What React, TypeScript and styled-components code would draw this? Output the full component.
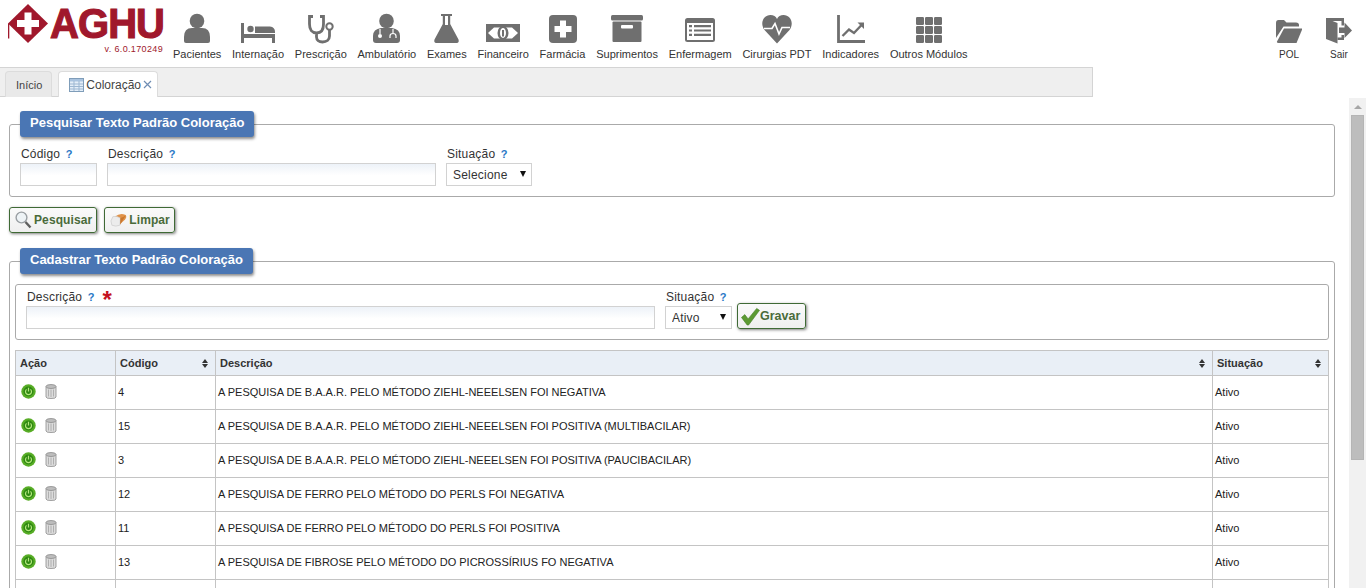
import React from 'react';
import styled, { createGlobalStyle } from 'styled-components';

const GlobalStyle = createGlobalStyle`
  html, body {
    margin: 0;
    height: 100%;
    overflow: hidden;
    background: #fff;
  }
  body {
    font-family: "Liberation Sans", Arial, sans-serif;
    color: #333;
  }
`;

const ICON = '#6f6f6f';
const RED = '#a0182c';

const Page = styled.div`
  width: 1366px;
  height: 588px;
  overflow: hidden;
  display: flex;
  flex-direction: column;
`;

const Header = styled.header`
  height: 67px;
  flex: none;
  display: flex;
  padding: 0 14px 0 7px;
  box-sizing: border-box;
`;

const LogoBlock = styled.div`
  width: 157px;
  margin-right: 9px;
  display: flex;
  flex-direction: column;
`;

const LogoRow = styled.div`
  display: flex;
  align-items: flex-start;
  padding-top: 3px;
  height: 41px;
`;

const LogoSvg = styled.svg`
  flex: none;
`;

const LogoWord = styled.span`
  font-size: 43px;
  font-weight: 700;
  line-height: 36px;
  margin: 2px 0 0 1px;
  color: ${RED};
  letter-spacing: -1px;
  -webkit-text-stroke: 1.2px ${RED};
  transform: scaleX(0.93);
  transform-origin: left center;
  white-space: nowrap;
`;

const Version = styled.span`
  align-self: flex-end;
  padding-right: 1px;
  font-size: 9px;
  line-height: 10px;
  letter-spacing: 0.35px;
  color: ${RED};
`;

const Nav = styled.nav`
  display: flex;
  gap: 10.75px;
`;

const NavItem = styled.a`
  display: flex;
  flex-direction: column;
  align-items: center;
  font-size: 11px;
  line-height: 13px;
  color: #333;
  white-space: nowrap;
`;

const NavIcon = styled.svg`
  display: block;
  margin: 12px 0 4px;
  fill: ${ICON};
`;

const RightNav = styled(Nav)`
  margin-left: auto;
  gap: 24px;
`;

const RightItem = styled(NavItem)`
  width: 26px;
  font-size: 10px;
`;

const TabBar = styled.div`
  width: 1093px;
  height: 30px;
  flex: none;
  box-sizing: border-box;
  background: #efefef;
  border-top: 1px solid #d4d4d4;
  border-bottom: 1px solid #d4d4d4;
  border-right: 1px solid #d4d4d4;
  padding: 3px 0 0 5px;
  display: flex;
  gap: 6px;
`;

const Tab = styled.div<{ $active?: boolean }>`
  height: 26px;
  box-sizing: border-box;
  display: flex;
  align-items: center;
  gap: 2px;
  font-size: ${p => (p.$active ? '12px' : '11px')};
  color: #444;
  border-radius: 4px 4px 0 0;
  background: ${p => (p.$active ? '#fff' : '#e9e9e9')};
  border: 1px solid #dcdcdc;
  border-bottom: none;
  padding: ${p => (p.$active ? '0 5px 0 10px' : '0 9px 0 10px')};
`;

const Body = styled.div`
  flex: 1;
  min-height: 0;
  display: flex;
`;

const Content = styled.main`
  flex: 1;
  min-width: 0;
  overflow: hidden;
  padding: 0 14px 0 9px;
`;

const ScrollTrack = styled.div`
  width: 17px;
  margin-top: 1px;
  flex: none;
  background: #f1f1f1;
  display: flex;
  flex-direction: column;
  align-items: center;
`;

const ScrollArrow = styled.div`
  margin: 7px 0 6px;
  width: 0;
  height: 0;
  border-left: 4px solid transparent;
  border-right: 4px solid transparent;
  border-bottom: 4px solid #a6a6a6;
`;

const ScrollThumb = styled.div`
  width: 13px;
  height: 345px;
  background: #bdbdbd;
  border: 1px solid #b5b5b5;
  box-sizing: border-box;
`;

const Panel = styled.fieldset<{ $top: number; $side: number }>`
  margin: ${p => p.$top}px 0 0;
  padding: 0 ${p => p.$side}px 10px;
  border: 1px solid #aaa;
  border-radius: 3px;
  min-width: 0;
`;

const PanelTitle = styled.legend<{ $indent: number }>`
  margin-left: ${p => p.$indent}px;
  height: 26px;
  box-sizing: border-box;
  padding: 0 10px;
  background: #4a76b4;
  color: #fff;
  font-size: 13px;
  font-weight: 700;
  line-height: 24px;
  border-radius: 3px;
  box-shadow: 1px 2px 3px rgba(0, 0, 0, 0.45);
`;

const FormRow = styled.div`
  display: flex;
  gap: 10px;
  padding-top: 8px;
  align-items: flex-end;
`;

const Field = styled.div`
  display: flex;
  flex-direction: column;
`;

const Label = styled.label`
  font-size: 12px;
  line-height: 18px;
  letter-spacing: 0.2px;
  color: #333;
  padding-left: 1px;
  white-space: nowrap;
`;

const Help = styled.span`
  font-size: 11px;
  font-weight: 700;
  color: #2a78c6;
  margin-left: 2px;
`;

const Required = styled.span`
  font-size: 24px;
  line-height: 10px;
  font-weight: 700;
  color: #c4121f;
  margin-left: 8px;
  vertical-align: -7px;
`;

const TextInput = styled.input<{ $width: number }>`
  display: block;
  width: ${p => p.$width}px;
  height: 23px;
  box-sizing: border-box;
  margin: 0;
  border: 1px solid #d2d2d2;
  background: linear-gradient(#edf2f8, #fff 55%);
  outline: none;
`;

const SelectWrap = styled.div<{ $width: number }>`
  position: relative;
  width: ${p => p.$width}px;
  &::after {
    content: '';
    position: absolute;
    right: 6px;
    top: 8px;
    border-left: 3.5px solid transparent;
    border-right: 3.5px solid transparent;
    border-top: 6px solid #111;
  }
`;

const Select = styled.select`
  appearance: none;
  display: block;
  width: 100%;
  height: 23px;
  box-sizing: border-box;
  margin: 0;
  padding: 0 0 0 6px;
  border: 1px solid #d2d2d2;
  background: #fff;
  font-family: inherit;
  font-size: 12px;
  letter-spacing: 0.2px;
  color: #333;
`;

const ButtonRow = styled.div`
  display: flex;
  gap: 7px;
  margin-top: 10px;
`;

const Button = styled.button`
  height: 26px;
  box-sizing: border-box;
  display: flex;
  align-items: center;
  gap: 2px;
  margin: 0;
  padding: 0 4px 0 5px;
  border: 1px solid #3f6a35;
  border-radius: 3px;
  background: linear-gradient(#fafafa, #efefef);
  box-shadow: 1px 1px 3px rgba(0, 0, 0, 0.5);
  font-family: inherit;
  font-size: 12px;
  font-weight: 700;
  letter-spacing: 0.1px;
  color: #4a6b3a;
  white-space: nowrap;
`;

const InnerBox = styled.div`
  margin-top: 10px;
  height: 56px;
  box-sizing: border-box;
  border: 1px solid #aaa;
  border-radius: 3px;
  padding: 0 10px;
  display: flex;
  gap: 10px;
  align-items: flex-start;
`;

const InnerField = styled(Field)`
  padding-top: 3px;
`;

const SaveButton = styled(Button)`
  margin: 18px 0 0 -5px;
  font-size: 12.5px;
  letter-spacing: 0;
  gap: 0;
  padding: 0 5px 0 3px;
`;

const Table = styled.table`
  margin-top: 10px;
  width: 1314px;
  table-layout: fixed;
  border-collapse: collapse;
  font-size: 11px;
  color: #222;
`;

const HeadCell = styled.th<{ $width?: number }>`
  width: ${p => (p.$width ? `${p.$width}px` : 'auto')};
  height: 25px;
  padding: 0 4px;
  box-sizing: border-box;
  border: 1px solid #c4c4c4;
  background: #e9eff6;
  font-weight: 700;
  text-align: left;
  color: #333;
`;

const HeadInner = styled.div`
  display: flex;
  align-items: center;
  justify-content: space-between;
`;

const SortMark = styled.span`
  display: flex;
  flex-direction: column;
  gap: 1px;
  margin-right: 3px;
  &::before, &::after {
    content: '';
    border-left: 3px solid transparent;
    border-right: 3px solid transparent;
  }
  &::before {
    border-bottom: 4px solid #333;
  }
  &::after {
    border-top: 4px solid #333;
  }
`;

const Cell = styled.td`
  height: 34px;
  padding: 0 2px 2px;
  box-sizing: border-box;
  border: 1px solid #c4c4c4;
  white-space: nowrap;
  overflow: hidden;
`;

const ActionCell = styled(Cell)`
  padding: 0 0 3px 5px;
`;

const Actions = styled.div`
  display: flex;
  align-items: center;
  gap: 9px;
`;

const TabTableIcon = () => (
  <svg width="15" height="14" viewBox="0 0 15 14">
    <rect x="0.5" y="0.5" width="14" height="13" fill="#e4eef8" stroke="#7f9db9" />
    <rect x="1" y="1" width="13" height="2.5" fill="#a9c3df" />
    <path d="M1 6h13M1 8.5h13M1 11h13M5 3v10M10 3v10" stroke="#9db7d2" strokeWidth="1" fill="none" />
  </svg>
);

const CloseIcon = () => (
  <svg width="9" height="9" viewBox="0 0 9 9">
    <path d="M1 1l7 7M8 1l-7 7" stroke="#6f8db3" strokeWidth="1.2" fill="none" />
  </svg>
);

const LogoMark = () => (
  <LogoSvg width="42" height="42" viewBox="0 0 42 42">
    <path d="M21 1L41 20.5 21 40 1 20.5Z" fill={RED} />
    <path d="M17.5 9.5h7V17H32v7h-7.5v7.5h-7V24H10v-7h7.5Z" fill="#fff" />
    <rect x="1" y="20.5" width="1.3" height="15" fill={RED} />
  </LogoSvg>
);

const PersonIcon = () => (
  <NavIcon width="26" height="32" viewBox="0 0 26 32">
    <circle cx="13" cy="9" r="7.3" />
    <path d="M0 29V25Q0 16 8 16H18Q26 16 26 25V29Q26 31 24 31H2Q0 31 0 29Z" />
  </NavIcon>
);

const BedIcon = () => (
  <NavIcon width="34" height="32" viewBox="0 0 34 32">
    <rect x="0" y="11" width="3" height="20" />
    <circle cx="9.5" cy="17" r="3.2" />
    <path d="M14 14.5H29Q34 15 34 20V21H14Z" />
    <rect x="3" y="22" width="31" height="4" />
    <rect x="31" y="26" width="3" height="5" />
  </NavIcon>
);

const StethoscopeIcon = () => (
  <NavIcon width="28" height="32" viewBox="0 0 28 32">
    <path
      d="M6 4.5H2.5V12C2.5 18 5 21 9.5 21C14 21 16.5 18 16.5 12V4.5H13M9.5 21V25C9.5 28 12 30 15.5 30C19.5 30 22.5 28 22.5 24V18"
      fill="none"
      stroke={ICON}
      strokeWidth="2.8"
    />
    <circle cx="22.5" cy="14.5" r="3.2" fill="none" stroke={ICON} strokeWidth="2" />
  </NavIcon>
);

const DoctorIcon = () => (
  <NavIcon width="27" height="32" viewBox="0 0 27 32">
    <circle cx="13.5" cy="9" r="7.3" />
    <path d="M0 28V24Q0 17 8 16H19Q27 17 27 24V28Q27 31 24 31H3Q0 31 0 28Z" />
    <path d="M7 17V22M20 17V21M17 26V24Q17 21.5 20 21.5Q23 21.5 23 24V26" fill="none" stroke="#fff" strokeWidth="1.2" />
    <circle cx="7" cy="24" r="2" fill="#fff" />
  </NavIcon>
);

const FlaskIcon = () => (
  <NavIcon width="25" height="32" viewBox="0 0 25 32">
    <path d="M7 2H18V4H16.2V12L24.5 27.5Q25.5 31 22 31H3Q-0.5 31 0.5 27.5L8.8 12V4H7Z" />
    <rect x="11" y="4" width="3" height="9" fill="#fff" />
  </NavIcon>
);

const MoneyIcon = () => (
  <NavIcon width="34" height="32" viewBox="0 0 34 32">
    <rect x="0" y="12" width="34" height="18" />
    <path d="M2 21L8 15.5H26L32 21L26 26.5H8Z" fill="#fff" />
    <ellipse cx="17" cy="21" rx="5.5" ry="7" />
    <ellipse cx="17" cy="21" rx="3" ry="5" fill="#fff" />
    <rect x="16" y="18" width="2" height="6.5" />
  </NavIcon>
);

const PlusIcon = () => (
  <NavIcon width="28" height="32" viewBox="0 0 28 32">
    <rect x="0" y="3" width="28" height="28" rx="4" />
    <path d="M11 8.5H17V14H22.5V20H17V25.5H11V20H5.5V14H11Z" fill="#fff" />
  </NavIcon>
);

const ArchiveIcon = () => (
  <NavIcon width="32" height="32" viewBox="0 0 32 32">
    <rect x="0" y="3" width="32" height="5.5" rx="1.5" />
    <rect x="1.5" y="9.5" width="29" height="20.5" rx="1" />
    <rect x="10" y="13" width="12" height="3.5" rx="1" fill="#fff" />
  </NavIcon>
);

const ListIcon = () => (
  <NavIcon width="30" height="32" viewBox="0 0 30 32">
    <rect x="0" y="6" width="30" height="24" rx="2.5" />
    <rect x="2" y="11" width="26" height="17" fill="#fff" />
    <path d="M9 14.2H26M9 18.5H26M9 22.8H26" stroke={ICON} strokeWidth="2.2" />
    <path d="M4 14.2H7M4 18.5H7M4 22.8H7" stroke={ICON} strokeWidth="2.2" />
  </NavIcon>
);

const HeartIcon = () => (
  <NavIcon width="30" height="32" viewBox="0 0 30 32">
    <path d="M15 31.5L2.5 18C-2.5 11 1.5 3 8.5 3C11.5 3 14 4.5 15 7C16 4.5 18.5 3 21.5 3C28.5 3 32.5 11 27.5 18Z" />
    <path d="M2 16.5H10L13 11.5L17 22L20 15.5H28" fill="none" stroke="#fff" strokeWidth="1.6" />
  </NavIcon>
);

const ChartIcon = () => (
  <NavIcon width="28" height="32" viewBox="0 0 28 32">
    <path d="M1.5 3V29.5H28" fill="none" stroke={ICON} strokeWidth="2.8" />
    <path d="M5.5 24L12 17.5L17 21L25 12.5" fill="none" stroke={ICON} strokeWidth="2.4" />
    <path d="M20.5 10.5H27V17Z" />
  </NavIcon>
);

const GridIcon = () => (
  <NavIcon width="26" height="32" viewBox="0 0 26 32">
    {[5, 14, 23].map(y =>
      [0, 9, 18].map(x => <rect key={`${x}-${y}`} x={x} y={y} width="8" height="8" rx="1.2" />)
    )}
  </NavIcon>
);

const FolderIcon = () => (
  <NavIcon width="26" height="32" viewBox="0 0 26 32">
    <path d="M0 11Q0 8 2.5 8H8L10.5 10.5H20Q23 10.5 23 13V14.5H7.5L0 26Z" />
    <path d="M8 16.5H26.5L20.5 31H2.5Q0.5 31 1 29.5Z" />
  </NavIcon>
);

const ExitIcon = () => (
  <NavIcon width="26" height="32" viewBox="0 0 26 32">
    <path d="M0 6H18V13.5H15.5V9H6.5L11.5 11V31.5L0 27Z" />
    <path d="M15.5 23H18V28H11.5V25.5H15.5Z" />
    <path d="M13 15.5H18.5V10.5L26 18.5L18.5 26V21H13Z" />
  </NavIcon>
);

const LensIcon = () => (
  <svg width="17" height="18" viewBox="0 0 17 18">
    <circle cx="6.5" cy="6.5" r="5.4" fill="#eef3f6" stroke="#9a9fa3" strokeWidth="1.4" />
    <path d="M10.5 11L15.5 16.5" stroke="#5f5f5f" strokeWidth="2.4" />
  </svg>
);

const EraserIcon = () => (
  <svg width="17" height="14" viewBox="0 0 18 14">
    <path d="M5 3.5Q11 -1 16 1.5Q18.5 3 16 6.5L11 11Z" fill="#e0934a" />
    <path d="M3 3.5Q7 2 11 5L10.5 12.5Q6 14.5 2 12.5Q-0.5 8 3 3.5Z" fill="#ececec" stroke="#c4c4c4" strokeWidth="0.6" />
    <path d="M11 5Q14 4 17 2Q14 6 10.8 12Z" fill="#c9772f" />
  </svg>
);

const CheckIcon = () => (
  <svg width="19" height="19" viewBox="0 0 20 19">
    <path d="M0.5 10.5L4 7.5L7.5 12L16.5 1L19.5 3L8 18.5H6.5Z" fill="#5c9a32" stroke="#3f7a22" strokeWidth="0.6" />
  </svg>
);

const PowerIcon = () => (
  <svg width="15" height="15" viewBox="0 0 15 15">
    <circle cx="7.5" cy="7.5" r="7.2" fill="#58ad26" />
    <circle cx="7.5" cy="7.5" r="5" fill="#2f8a12" />
    <path d="M5.5 5.4A3 3 0 1 0 9.5 5.4M7.5 3.8V7.5" fill="none" stroke="#b4e67c" strokeWidth="1.2" />
  </svg>
);

const TrashIcon = () => (
  <svg width="12" height="15" viewBox="0 0 12 15">
    <path d="M1 2.5V13Q1 14.5 6 14.5Q11 14.5 11 13V2.5Z" fill="#dcdcdc" stroke="#8c8c8c" strokeWidth="0.8" />
    <ellipse cx="6" cy="2.5" rx="5" ry="2" fill="#bdbdbd" stroke="#8c8c8c" strokeWidth="0.8" />
    <path d="M3.5 5.5V12.5M6 5.5V13M8.5 5.5V12.5" stroke="#a3a3a3" strokeWidth="0.8" />
  </svg>
);

const modules: [string, React.FC][] = [
  ['Pacientes', PersonIcon],
  ['Internação', BedIcon],
  ['Prescrição', StethoscopeIcon],
  ['Ambulatório', DoctorIcon],
  ['Exames', FlaskIcon],
  ['Financeiro', MoneyIcon],
  ['Farmácia', PlusIcon],
  ['Suprimentos', ArchiveIcon],
  ['Enfermagem', ListIcon],
  ['Cirurgias PDT', HeartIcon],
  ['Indicadores', ChartIcon],
  ['Outros Módulos', GridIcon],
];

const BAAR = 'A PESQUISA DE B.A.A.R. PELO MÉTODO ZIEHL-NEEELSEN FOI';

const rows: [string, string][] = [
  ['4', `${BAAR} NEGATIVA`],
  ['15', `${BAAR} POSITIVA (MULTIBACILAR)`],
  ['3', `${BAAR} POSITIVA (PAUCIBACILAR)`],
  ['12', 'A PESQUISA DE FERRO PELO MÉTODO DO PERLS FOI NEGATIVA'],
  ['11', 'A PESQUISA DE FERRO PELO MÉTODO DO PERLS FOI POSITIVA'],
  ['13', 'A PESQUISA DE FIBROSE PELO MÉTODO DO PICROSSÍRIUS FO NEGATIVA'],
];

export default function App () {
  return (
    <Page>
      <GlobalStyle />
      <Header>
        <LogoBlock>
          <LogoRow>
            <LogoMark />
            <LogoWord>AGHU</LogoWord>
          </LogoRow>
          <Version>v. 6.0.170249</Version>
        </LogoBlock>
        <Nav>
          {modules.map(([name, Icon]) => (
            <NavItem key={name}>
              <Icon />
              {name}
            </NavItem>
          ))}
        </Nav>
        <RightNav>
          <RightItem><FolderIcon />POL</RightItem>
          <RightItem><ExitIcon />Sair</RightItem>
        </RightNav>
      </Header>

      <TabBar>
        <Tab>Início</Tab>
        <Tab $active><TabTableIcon />Coloração<CloseIcon /></Tab>
      </TabBar>

      <Body>
        <Content>
          <Panel $top={14} $side={10}>
            <PanelTitle $indent={0}>Pesquisar Texto Padrão Coloração</PanelTitle>
            <FormRow>
              <Field>
                <Label>Código <Help>?</Help></Label>
                <TextInput $width={77} />
              </Field>
              <Field>
                <Label>Descrição <Help>?</Help></Label>
                <TextInput $width={329} />
              </Field>
              <Field>
                <Label>Situação <Help>?</Help></Label>
                <SelectWrap $width={86}>
                  <Select><option>Selecione</option></Select>
                </SelectWrap>
              </Field>
            </FormRow>
          </Panel>

          <ButtonRow>
            <Button><LensIcon />Pesquisar</Button>
            <Button><EraserIcon />Limpar</Button>
          </ButtonRow>

          <Panel $top={15} $side={5}>
            <PanelTitle $indent={5}>Cadastrar Texto Padrão Coloração</PanelTitle>
            <InnerBox>
              <InnerField>
                <Label>Descrição <Help>?</Help><Required>*</Required></Label>
                <TextInput $width={629} />
              </InnerField>
              <InnerField>
                <Label>Situação <Help>?</Help></Label>
                <SelectWrap $width={67}>
                  <Select><option>Ativo</option></Select>
                </SelectWrap>
              </InnerField>
              <SaveButton><CheckIcon />Gravar</SaveButton>
            </InnerBox>

            <Table>
              <thead>
                <tr>
                  <HeadCell $width={100}>Ação</HeadCell>
                  <HeadCell $width={100}><HeadInner>Código<SortMark /></HeadInner></HeadCell>
                  <HeadCell><HeadInner>Descrição<SortMark /></HeadInner></HeadCell>
                  <HeadCell $width={116}><HeadInner>Situação<SortMark /></HeadInner></HeadCell>
                </tr>
              </thead>
              <tbody>
                {rows.map(([code, text]) => (
                  <tr key={code}>
                    <ActionCell>
                      <Actions><PowerIcon /><TrashIcon /></Actions>
                    </ActionCell>
                    <Cell>{code}</Cell>
                    <Cell>{text}</Cell>
                    <Cell>Ativo</Cell>
                  </tr>
                ))}
                <tr>
                  <Cell />
                  <Cell />
                  <Cell />
                  <Cell />
                </tr>
              </tbody>
            </Table>
          </Panel>
        </Content>
        <ScrollTrack>
          <ScrollArrow />
          <ScrollThumb />
        </ScrollTrack>
      </Body>
    </Page>
  );
}
